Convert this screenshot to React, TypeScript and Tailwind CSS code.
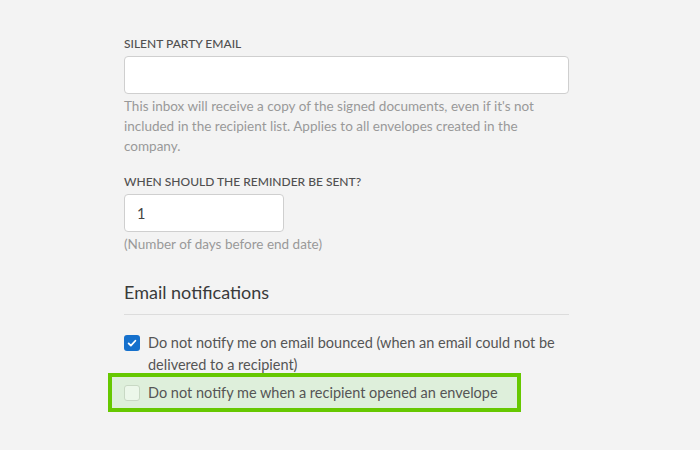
import React from 'react';

export default function App() {
  return (
    <div className="min-h-[450px] w-full bg-[#f3f3f3] font-['Lato','Open_Sans',sans-serif] text-[#555]">
      <div className="ml-[124px] w-[445px] pt-[37px]">
        <label className="block text-[12px] leading-[14px] font-medium uppercase text-[#505050]">Silent party email</label>
        <input
          type="text"
          className="mt-[5px] block h-[38px] w-full rounded-[4px] border border-[#cfcfcf] bg-white px-3 text-[14px] outline-none"
        />
        <p className="mt-[2px] text-[13.5px] leading-[20px] text-[#999]">
          This inbox will receive a copy of the signed documents, even if it's not included in the recipient list. Applies to all envelopes created in the company.
        </p>

        <label className="mt-[19px] block text-[12px] leading-[14px] font-medium uppercase text-[#505050]">When should the reminder be sent?</label>
        <input
          type="text"
          defaultValue="1"
          className="mt-[5px] block h-[38px] w-[160px] rounded-[4px] border border-[#cfcfcf] bg-white px-3 text-[14.5px] text-[#444] outline-none"
        />
        <p className="mt-[2px] text-[13.5px] leading-[20px] text-[#999]">(Number of days before end date)</p>

        <h2 className="mt-[26px] text-[18px] leading-[24px] text-[#3a3a3a]">Email notifications</h2>
        <div className="mt-[10px] h-px w-full bg-[#dcdcdc]" />

        <div className="mt-[17px] flex items-start gap-[8px]">
          <span className="mt-[3px] flex size-[16px] shrink-0 items-center justify-center rounded-[3px] bg-[#1570cc]">
            <svg viewBox="0 0 16 16" className="size-[12px]" fill="none" stroke="white" strokeWidth="2.4" strokeLinecap="round" strokeLinejoin="round">
              <path d="M3.5 8.5l3 3 6-6.5" />
            </svg>
          </span>
          <span className="text-[14.5px] leading-[22px] text-[#555]">
            Do not notify me on email bounced (when an email could not be delivered to a recipient)
          </span>
        </div>
      </div>

      <div className="ml-[108px] mt-[-3px] flex h-[39px] w-[413px] items-center gap-[8px] border-[4px] border-[#66c800] bg-[#deefdb] pl-[12px]">
        <span className="size-[16px] shrink-0 rounded-[3px] border border-[#c8d8c4] bg-[#ecf7ea]" />
        <span className="text-[14.5px] leading-[22px] text-[#555]">Do not notify me when a recipient opened an envelope</span>
      </div>
    </div>
  );
}
